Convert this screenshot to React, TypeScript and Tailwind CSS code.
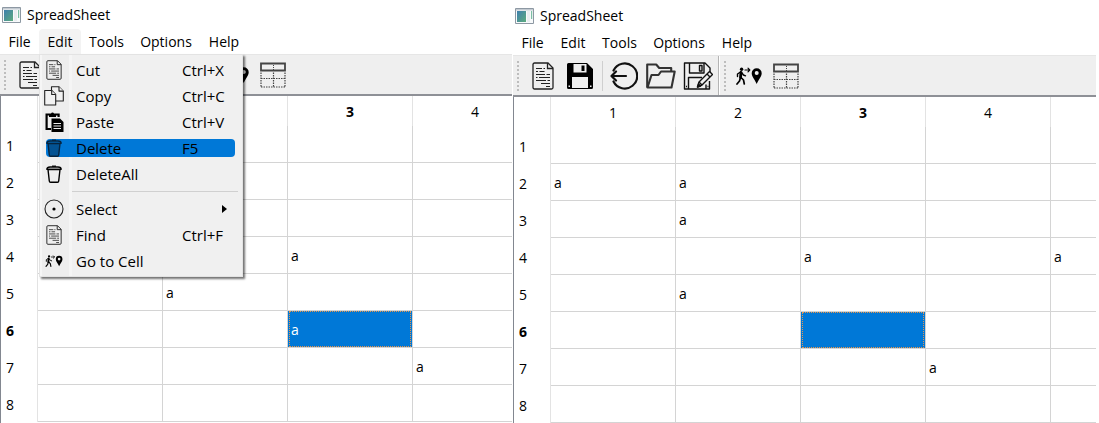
import type { ReactNode } from "react";
import { clsx } from "clsx";

function DocumentIcon({ className }: { className: string }) {
  return (
    <svg viewBox="0 0 22 28" className={className} fill="none" stroke="#222" strokeWidth="1.3" aria-hidden="true">
      <path d="M2.5 1h13.5l5 5v19.5a1.5 1.5 0 0 1-1.5 1.5h-17A1.5 1.5 0 0 1 1 25.500V2.500A1.500 1.500 0 0 1 2.500 1z" />
      <path d="M15.500 1v5.500h5.500" />
      <path d="M4 6.500h6M11.500 6.500h1.500M4 9.500h2M7.500 9.500h5M4 12.500h9M14.500 12.500h3.500M4 15.500h1.500M7 15.500h11M4 18.500h10M15.500 18.500h2.500M9 21.500h9M14 24.500h4" strokeWidth="1.1" />
    </svg>
  );
}

function SaveIcon({ className }: { className: string }) {
  return (
    <svg viewBox="0 0 26 26" className={className} aria-hidden="true">
      <path fill="#000" d="M1.500 0H20l6 6v18.500a1.500 1.500 0 0 1-1.500 1.500h-23A1.500 1.500 0 0 1 0 24.500v-23A1.500 1.500 0 0 1 1.500 0z" />
      <path fill="#efefef" d="M6.500 1h13v8.500h-13zM5 14h16v11H5z" />
      <path fill="#000" d="M14.500 2.500h3v5.500h-3z" />
      <path fill="#efefef" d="M1.500 22.500H3V24H1.500zM23 22.500h1.500V24H23z" />
    </svg>
  );
}

function BackIcon({ className }: { className: string }) {
  return (
    <svg viewBox="0 0 28 28" className={className} fill="none" stroke="#111" strokeWidth="2.200" strokeLinecap="round" aria-hidden="true">
      <path d="M3.500 8.500a12.500 12.500 0 1 1 0 11" />
      <path d="M16 14H1.500M6 9.500L1.500 14L6 18.500" strokeLinejoin="round" />
    </svg>
  );
}

function FolderIcon({ className }: { className: string }) {
  return (
    <svg viewBox="0 0 30 26" className={className} fill="none" stroke="#333" strokeWidth="2.100" strokeLinejoin="round" aria-hidden="true">
      <path d="M1.200 24.500V1.500h9l3 3.500h12v3.500" />
      <path d="M1.500 24.500L5.500 12h7l2.500-3.500h13.700L25.500 24.500z" />
    </svg>
  );
}

function SaveEditIcon({ className }: { className: string }) {
  return (
    <svg viewBox="0 0 30 28" className={className} fill="none" stroke="#111" strokeWidth="1.400" strokeLinejoin="round" aria-hidden="true">
      <path d="M26.500 19v8h-25V1H22l5 5v6" />
      <path d="M6.500 1v10h14.500V1M16.500 3.500h2.500v5.500h-2.500z" />
      <path d="M5.500 27V15.500h13.500M23 22.500V27" />
      <path d="M14.500 25l1.500-5L26.500 9.500l3 3L19 23z" fill="#efefef" />
      <path d="M24 12l3 3M16 20l3 3" />
      <path d="M14.500 25l1-3 2 2z" fill="#111" />
      <path d="M3 24.500h1M24.500 24.500h1" />
    </svg>
  );
}

function GoToIcon({ className }: { className: string }) {
  return (
    <svg viewBox="0 0 26 18" className={className} aria-hidden="true">
      <circle cx="5.600" cy="2.200" r="1.700" />
      <g fill="none" stroke="#000" strokeLinecap="round" strokeLinejoin="round">
        <path d="M5 5.500L4.500 10.500" strokeWidth="2.800" />
        <path d="M4.500 5L1.500 7v2.500M5.500 5.500L7.500 8l2 .8" strokeWidth="1.400" />
        <path d="M4.500 10.500L3.500 14L1 17M5 10.500l2.500 2.500l.8 4" strokeWidth="1.700" />
        <path d="M9 3h4.500M12 1.200L13.800 3L12 4.800" strokeWidth="1.200" />
      </g>
      <path fillRule="evenodd" d="M20.700 1.200a5 5 0 0 1 5 5c0 3.300-3.200 6.300-5 10.800c-1.800-4.500-5-7.500-5-10.800a5 5 0 0 1 5-5zm0 2.900a2 2 0 1 0 0 4a2 2 0 0 0 0-4z" />
    </svg>
  );
}

function TableIcon({ className }: { className: string }) {
  return (
    <svg viewBox="0 0 26 26" className={className} fill="none" stroke="#444" aria-hidden="true">
      <path d="M1 1.500h24v7H1z" strokeWidth="1.800" />
      <path d="M13.500 3v5" strokeDasharray="1 1" />
      <path d="M1 10.500v15M13.500 10.500v15M25 10.500v15M1 16.500h24M1 25h24" strokeDasharray="1.500 1" strokeWidth="1.200" />
    </svg>
  );
}

function CopyIcon({ className }: { className: string }) {
  return (
    <svg viewBox="0 0 20 20" className={className} fill="#f2f2f2" stroke="#222" strokeWidth="1.100" strokeLinejoin="round" aria-hidden="true">
      <path d="M7.500 15V.800h7.500l4.300 4.300V15z" />
      <path d="M15 .800v4.300h4.300" />
      <path d="M.700 19V4.500h7l4 4V19z" />
      <path d="M7.700 4.500v4h4" />
    </svg>
  );
}

function PasteIcon({ className }: { className: string }) {
  return (
    <svg viewBox="0 0 19 20" className={className} aria-hidden="true">
      <path fill="none" stroke="#000" strokeWidth="2.200" d="M4 2.500H1.600v14.500H6M11 2.500h2.600V5" />
      <path d="M4 1.500h2a1.600 1.600 0 0 1 3 0h2V5H4zM6.500 6.500H15l3.500 3.500v10h-12z" />
      <path stroke="#eee" strokeWidth="1.200" d="M8.500 11.500h7.500M8.500 14h7.500M8.500 16.500h7.500" />
    </svg>
  );
}

function TrashIcon({ className }: { className: string }) {
  return (
    <svg viewBox="0 0 16 18" className={className} fill="none" stroke="currentColor" strokeLinejoin="round" aria-hidden="true">
      <path d="M2 4.500l1.300 11.500a1.300 1.300 0 0 0 1.300 1.200h6.800a1.300 1.300 0 0 0 1.300-1.200L14 4.500z" fill="currentColor" fillOpacity="var(--fill)" strokeWidth="1.400" />
      <path d="M.800 4.300C.800 2.500 2 2 4 2h8c2 0 3.200.500 3.200 2.300z" strokeWidth="1.300" />
      <path d="M6 1.200h4" strokeWidth="1.300" />
    </svg>
  );
}

function TargetIcon({ className }: { className: string }) {
  return (
    <svg viewBox="0 0 20 20" className={className} aria-hidden="true">
      <circle cx="10" cy="10" r="9" fill="none" stroke="#222" strokeWidth="1.100" />
      <circle cx="10" cy="10" r="1.600" />
    </svg>
  );
}

function WindowIcon() {
  return (
    <svg viewBox="0 0 19 16" className="h-4 w-[19px]" aria-hidden="true">
      <defs>
        <linearGradient id="pane" x1="0" y1="0" x2="1" y2="1">
          <stop offset="0" stopColor="#3e7fae" />
          <stop offset="1" stopColor="#5cab7d" />
        </linearGradient>
      </defs>
      <path fill="#f8fafb" stroke="#8d98a3" d="M.500.500h18v15H.500z" />
      <path fill="#c3cad1" d="M1 1h17v1.500H1z" />
      <path fill="url(#pane)" d="M2 3h9v11H2z" />
      <path fill="#e9edf0" d="M12 3h3v11h-3z" />
      <path fill="#7dbfa5" d="M16 3h1.200v8H16z" />
    </svg>
  );
}

const menus = [
  { label: "File", width: "w-[39px]" },
  { label: "Edit", width: "w-[42px]" },
  { label: "Tools", width: "w-[51px]" },
  { label: "Options", width: "w-[68px]" },
  { label: "Help", width: "w-[48px]" },
];

type Item = { label: string; keys?: string; icon: ReactNode; active?: boolean; submenu?: boolean };

const editItems: Item[] = [
  { label: "Cut", keys: "Ctrl+X", icon: <DocumentIcon className="h-5 w-4" /> },
  { label: "Copy", keys: "Ctrl+C", icon: <CopyIcon className="size-5" /> },
  { label: "Paste", keys: "Ctrl+V", icon: <PasteIcon className="h-5 w-[19px]" /> },
  { label: "Delete", keys: "F5", icon: <TrashIcon className="h-[18px] w-4 text-[#06243f] [--fill:0.45]" />, active: true },
  { label: "DeleteAll", icon: <TrashIcon className="h-[18px] w-4 text-black [--fill:0]" /> },
];

const findItems: Item[] = [
  { label: "Select", icon: <TargetIcon className="size-5" />, submenu: true },
  { label: "Find", keys: "Ctrl+F", icon: <DocumentIcon className="h-5 w-4" /> },
  { label: "Go to Cell", icon: <GoToIcon className="h-3 w-[18px]" /> },
];

function MenuItem({ item }: { item: Item }) {
  return (
    <button type="button" role="menuitem" className="flex h-[26px] w-full items-center pr-[7px] pl-[5px] text-left">
      <span className={clsx("flex h-[18px] flex-1 items-center rounded", item.active && "bg-[#0078d7]")}>
        <span className="flex w-4 items-center justify-center">
          <span className="flex shrink-0">{item.icon}</span>
        </span>
        <span className="ml-[14px] w-[106px] pt-0.5">{item.label}</span>
        <span className="flex-1 pt-0.5">{item.keys}</span>
        {item.submenu && (
          <svg viewBox="0 0 5 8" className="mr-2 h-2 w-[5px]" aria-hidden="true">
            <path d="M0 0l5 4l-5 4z" />
          </svg>
        )}
      </span>
    </button>
  );
}

function EditMenu() {
  return (
    <div
      role="menu"
      aria-label="Edit"
      className="absolute top-full left-0 z-10 w-[204px] border border-[#e3e3e3] bg-[#f0f0f0] bg-[linear-gradient(to_right,#f6f6f6_2px,#eeeeee_2px,#eeeeee_29px,#f5f5f5_29px,#f5f5f5_32px,#f0f0f0_32px)] py-0.5 pl-px text-[15px] shadow-[2px_2px_2px_rgba(0,0,0,0.55)]"
    >
      {editItems.map((item) => (
        <MenuItem key={item.label} item={item} />
      ))}
      <div role="separator" className="mr-1 ml-[31px] flex h-[9px] items-center">
        <span className="h-px flex-1 bg-[#d0d0d0]" />
      </div>
      {findItems.map((item) => (
        <MenuItem key={item.label} item={item} />
      ))}
    </div>
  );
}

function ToolButton({ label, children }: { label: string; children: ReactNode }) {
  return (
    <button type="button" aria-label={label} className="flex h-9 w-[37px] shrink-0 items-center justify-center">
      {children}
    </button>
  );
}

function Grip() {
  return (
    <span className="ml-1 h-[30px] w-0.5 shrink-0 bg-[repeating-linear-gradient(to_bottom,#bdbdbd_0px,#bdbdbd_2px,#efefef_2px,#efefef_4px)]" />
  );
}

function Toolbar() {
  return (
    <div role="toolbar" className="flex h-[42px] items-center overflow-hidden border-t border-b-2 border-t-[#e6e6e6] border-b-[#8e9096] bg-[#efefef]">
      <Grip />
      <span className="w-[5px] shrink-0" />
      <ToolButton label="New">
        <DocumentIcon className="h-7 w-[22px]" />
      </ToolButton>
      <ToolButton label="Save">
        <SaveIcon className="size-[26px]" />
      </ToolButton>
      <span className="mr-0.5 ml-1 h-[30px] w-px shrink-0 bg-[#cfcfcf]" />
      <ToolButton label="Back">
        <BackIcon className="size-7" />
      </ToolButton>
      <ToolButton label="Open">
        <FolderIcon className="h-[26px] w-[30px]" />
      </ToolButton>
      <ToolButton label="Save as">
        <SaveEditIcon className="h-7 w-[30px]" />
      </ToolButton>
      <span className="ml-0.5 h-full w-0.5 shrink-0 border-r border-l border-r-white border-l-[#b4b4b4]" />
      <Grip />
      <span className="w-1 shrink-0" />
      <ToolButton label="Go to cell">
        <GoToIcon className="h-[18px] w-[26px]" />
      </ToolButton>
      <ToolButton label="Table">
        <TableIcon className="size-[26px]" />
      </ToolButton>
    </div>
  );
}

const rows = [1, 2, 3, 4, 5, 6, 7, 8];

function Sheet({ cells, columns }: { cells: Record<string, string>; columns: string[] }) {
  return (
    <div className="flex-1 overflow-hidden border-l border-[#828790]">
      <table className="w-full table-fixed border-separate border-spacing-0">
        <thead>
          <tr className="h-[30px]">
            <th className="w-[37px] border-r border-[#e3e3e3] p-0" />
            {columns.map((name, i) => (
              <th
                key={i}
                scope="col"
                className={clsx(
                  "w-[125px] border-r border-[#e3e3e3] px-0 pt-0.5 pb-0",
                  name === "3" ? "font-bold" : "font-normal",
                )}
              >
                {name}
              </th>
            ))}
          </tr>
        </thead>
        <tbody>
          {rows.map((row) => (
            <tr key={row} className="h-[37px]">
              <th
                scope="row"
                className={clsx("border-r border-[#e3e3e3] pt-0.5 pb-0 pl-[5px] text-left", row === 6 ? "font-bold" : "font-normal")}
              >
                {row}
              </th>
              {columns.map((_, i) => {
                const selected = row === 6 && i === 2;
                return (
                  <td
                    key={i}
                    className={clsx(
                      "border-r border-b border-[#d4d4d4] p-0",
                      selected && "bg-[#0078d7] bg-clip-padding px-px text-white",
                    )}
                  >
                    <span
                      className={clsx(
                        "flex h-9 items-center pt-0.5",
                        selected ? "border border-dotted border-[#e8954a] pl-px" : "pl-[3px]",
                      )}
                    >
                      {cells[`${row}-${i + 1}`]}
                    </span>
                  </td>
                );
              })}
            </tr>
          ))}
        </tbody>
      </table>
    </div>
  );
}

type WindowProps = {
  className: string;
  menuOpen?: boolean;
  columns: string[];
  cells: Record<string, string>;
};

function SheetWindow({ className, menuOpen, columns, cells }: WindowProps) {
  return (
    <section className={clsx("flex min-w-0 flex-col", className)}>
      <header className="flex h-[29px] items-center gap-1.5 pl-0.5">
        <WindowIcon />
        <h1>SpreadSheet</h1>
      </header>
      <nav className="flex h-[25px]">
        {menus.map(({ label, width }) => {
          const open = menuOpen && label === "Edit";
          return (
            <div key={label} className={clsx("relative flex", width)}>
              <button type="button" className={clsx("flex-1 rounded-t pt-px", open && "bg-[#f3f3f3]")}>
                {label}
              </button>
              {open && <EditMenu />}
            </div>
          );
        })}
      </nav>
      <Toolbar />
      <Sheet columns={columns} cells={cells} />
    </section>
  );
}

export default function App() {
  return (
    <main className="flex min-h-screen gap-px bg-white pr-[3px] font-['Open_Sans','Noto_Sans',sans-serif] text-sm text-black">
      <SheetWindow
        className="flex-[512]"
        menuOpen
        columns={["1", "2", "3", "4"]}
        cells={{ "4-3": "a", "5-2": "a", "6-3": "a", "7-4": "a" }}
      />
      <SheetWindow
        className="flex-[583] pt-px"
        columns={["1", "2", "3", "4", ""]}
        cells={{ "2-1": "a", "2-2": "a", "3-2": "a", "4-3": "a", "4-5": "a", "5-2": "a", "7-4": "a" }}
      />
    </main>
  );
}
